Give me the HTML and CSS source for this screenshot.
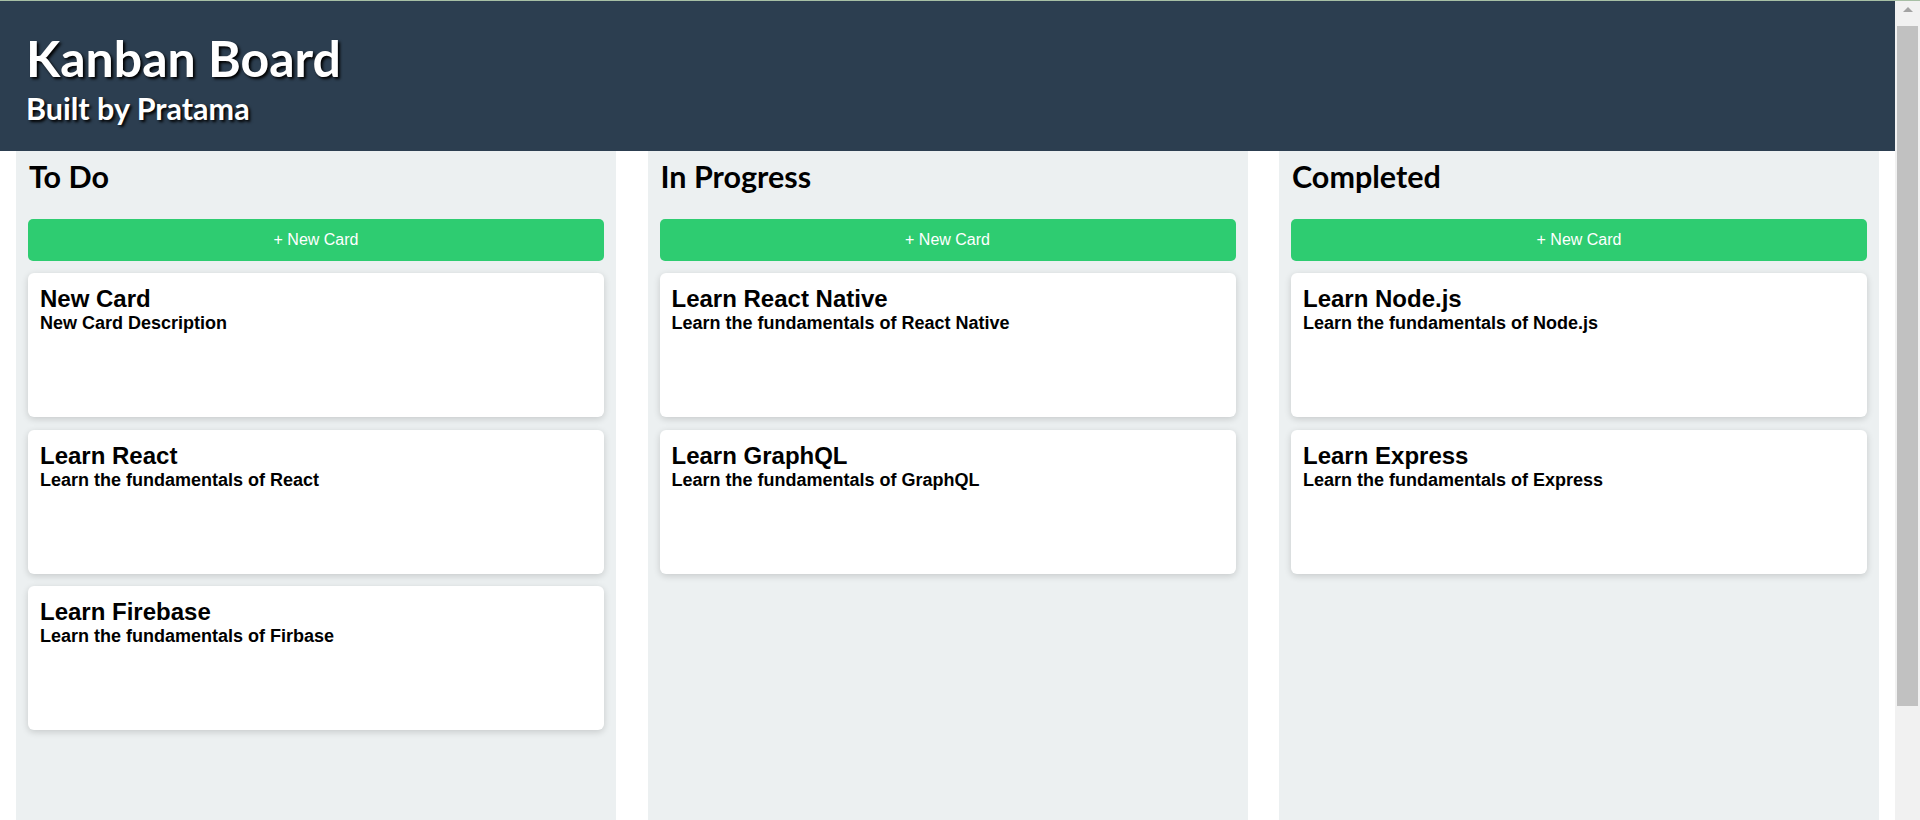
FILE: index.html
```html
<!DOCTYPE html>
<html lang="en">
<head>
<meta charset="utf-8">
<title>Kanban Board</title>
<link rel="stylesheet" href="styles.css">
</head>
<body>
<div class="page">
  <header class="app-header">
    <h1 class="app-title">Kanban Board</h1>
    <h2 class="app-subtitle">Built by Pratama</h2>
  </header>
  <main class="board">
    <section class="column">
      <h2 class="column-title">To Do</h2>
      <button class="new-card">+ New Card</button>
      <div class="card-list">
        <div class="card">
          <h3 class="card-title">New Card</h3>
          <p class="card-desc">New Card Description</p>
        </div>
        <div class="card">
          <h3 class="card-title">Learn React</h3>
          <p class="card-desc">Learn the fundamentals of React</p>
        </div>
        <div class="card">
          <h3 class="card-title">Learn Firebase</h3>
          <p class="card-desc">Learn the fundamentals of Firbase</p>
        </div>
      </div>
    </section>
    <section class="column">
      <h2 class="column-title">In Progress</h2>
      <button class="new-card">+ New Card</button>
      <div class="card-list">
        <div class="card">
          <h3 class="card-title">Learn React Native</h3>
          <p class="card-desc">Learn the fundamentals of React Native</p>
        </div>
        <div class="card">
          <h3 class="card-title">Learn GraphQL</h3>
          <p class="card-desc">Learn the fundamentals of GraphQL</p>
        </div>
      </div>
    </section>
    <section class="column">
      <h2 class="column-title">Completed</h2>
      <button class="new-card">+ New Card</button>
      <div class="card-list">
        <div class="card">
          <h3 class="card-title">Learn Node.js</h3>
          <p class="card-desc">Learn the fundamentals of Node.js</p>
        </div>
        <div class="card">
          <h3 class="card-title">Learn Express</h3>
          <p class="card-desc">Learn the fundamentals of Express</p>
        </div>
      </div>
    </section>
  </main>
</div>
<div class="scrollbar" aria-hidden="true">
  <div class="scroll-arrow"></div>
  <div class="scroll-thumb"></div>
</div>
</body>
</html>
```

FILE: styles.css
```css
html {
  background: #ffffff;
}

body {
  margin: 0;
  display: flex;
  align-items: flex-start;
  font-family: "Liberation Sans", Arial, sans-serif;
  color: #000;
  border-top: 1px solid #a7bfa5;
}

.page {
  flex: 1;
  min-width: 0;
}

.scrollbar {
  flex: none;
  width: 25px;
  height: 819px;
  box-sizing: border-box;
  background: #f1f1f1;
  display: flex;
  flex-direction: column;
  align-items: center;
}

.scroll-arrow {
  margin-top: 6px;
  width: 0;
  height: 0;
  border-left: 5px solid transparent;
  border-right: 5px solid transparent;
  border-bottom: 5px solid #a3a3a3;
}

.scroll-thumb {
  margin-top: 14px;
  width: 21px;
  height: 680px;
  background: #c1c1c1;
}

.app-header {
  background: #2c3e50;
  color: #ffffff;
  padding: 29px 26px 25px;
  text-shadow: 2px 2px 3px #000;
  font-family: Lato, "Open Sans", sans-serif;
}

.app-title {
  margin: 0;
  font-size: 50px;
  line-height: 56px;
  font-weight: 700;
}

.app-subtitle {
  margin: 4px 0 0;
  font-size: 30.5px;
  line-height: 36px;
  font-weight: 700;
}

.board {
  display: flex;
  justify-content: space-between;
  padding: 0 16px;
}

.column {
  width: 600px;
  box-sizing: border-box;
  min-height: 800px;
  background: #ecf0f1;
  padding: 5px 12px 12px;
}

.column-title {
  margin: 0 0 23px;
  font-family: Lato, "Open Sans", sans-serif;
  font-size: 30.5px;
  line-height: 40px;
  font-weight: 700;
  padding-left: 1px;
}

.new-card {
  display: block;
  width: 100%;
  height: 42px;
  border: none;
  border-radius: 5px;
  background: #2ecc71;
  color: #ffffff;
  font-family: "Liberation Sans", Arial, sans-serif;
  font-size: 16px;
  padding: 0;
}

.card-list {
  display: flex;
  flex-direction: column;
  gap: 12.5px;
  margin-top: 12px;
}

.card {
  box-sizing: border-box;
  height: 144px;
  background: #ffffff;
  border-radius: 6px;
  padding: 12px 12px;
  box-shadow: 0 2px 7px rgba(0, 0, 0, 0.16);
}

.card-title {
  margin: 0;
  font-size: 24px;
  font-weight: 700;
  line-height: normal;
}

.card-desc {
  margin: 0;
  font-size: 18px;
  font-weight: 700;
  line-height: normal;
}
```
